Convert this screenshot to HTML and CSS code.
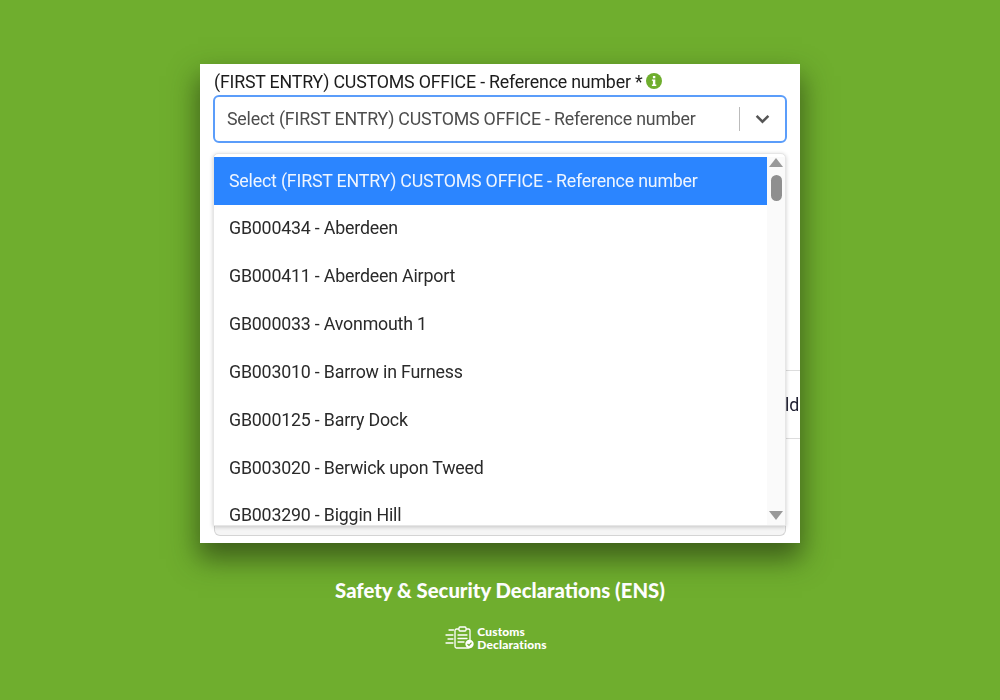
FILE: index.html
```html
<!DOCTYPE html>
<html lang="en">
<head>
<meta charset="utf-8">
<title>Safety &amp; Security Declarations (ENS)</title>
<link rel="stylesheet" href="styles.css">
</head>
<body>
<main class="page">
  <section class="card">
    <div class="label-row">
      <span>(FIRST ENTRY) CUSTOMS OFFICE - Reference number *</span>
      <svg class="info" viewBox="0 0 16 16" aria-hidden="true"><circle cx="8" cy="8" r="8" fill="#6fae2e"/><rect x="6.9" y="3" width="2.4" height="2.3" fill="#fff"/><path d="M5.9 6.5h3.4v5.1h1v1.3H5.9v-1.3h1V7.8h-1z" fill="#fff"/></svg>
    </div>
    <div class="select">
      <span class="select-text">Select (FIRST ENTRY) CUSTOMS OFFICE - Reference number</span>
      <span class="divider"></span>
      <svg class="chevron" viewBox="0 0 14 9" aria-hidden="true"><path d="M1.500 1.500 7 7l5.500-5.500" fill="none" stroke="#555" stroke-width="2.300"/></svg>
    </div>
    <div class="behind">
      <div class="behind-row"><span>ld</span></div>
      <div class="behind-foot"></div>
    </div>
    <div class="menu">
      <ul class="options">
        <li class="option selected">Select (FIRST ENTRY) CUSTOMS OFFICE - Reference number</li>
        <li class="option">GB000434 - Aberdeen</li>
        <li class="option">GB000411 - Aberdeen Airport</li>
        <li class="option">GB000033 - Avonmouth 1</li>
        <li class="option">GB003010 - Barrow in Furness</li>
        <li class="option">GB000125 - Barry Dock</li>
        <li class="option">GB003020 - Berwick upon Tweed</li>
        <li class="option last">GB003290 - Biggin Hill</li>
      </ul>
      <div class="scrollbar">
        <span class="arrow up"></span>
        <span class="thumb"></span>
        <span class="arrow down"></span>
      </div>
    </div>
  </section>
  <h1 class="caption">Safety &amp; Security Declarations (ENS)</h1>
  <div class="logo">
    <svg class="logo-mark" viewBox="0 0 30 24" aria-hidden="true">
      <g fill="none" stroke="#fff" stroke-width="1.300" stroke-linecap="round">
        <rect x="10" y="3" width="15" height="19" rx="1.500"/>
        <rect x="14" y="1" width="7" height="4" rx="1" fill="#6fae2e"/>
        <path d="M13 9h9M13 12.500h9M13 16h6"/>
        <path d="M4 4h3M7.500 4h1M1 9h7M3 13h5M1 17h7"/>
      </g>
      <circle cx="24.500" cy="18" r="4.200" fill="#fff"/>
      <path d="M22.500 18l1.500 1.500 2.500-2.800" fill="none" stroke="#6fae2e" stroke-width="1.200"/>
    </svg>
    <div class="logo-text"><span>Customs</span><span>Declarations</span></div>
  </div>
</main>
</body>
</html>
```
FILE: styles.css
```css
* { box-sizing: border-box; }
html, body { margin: 0; height: 100%; }
body {
  background: #6fae2e;
  font-family: Roboto, "Liberation Sans", sans-serif;
  overflow: hidden;
}
.page {
  height: 700px;
  display: flex;
  flex-direction: column;
  align-items: center;
  padding-top: 64px;
}
.card {
  position: relative;
  width: 600px;
  height: 479px;
  background: #fff;
  padding: 6px 13px 0;
  box-shadow: 0 14px 26px 2px rgba(38, 58, 16, .68);
  filter: blur(.3px);
  letter-spacing: -.19px;
}
.label-row {
  display: flex;
  align-items: center;
  gap: 4px;
  height: 22px;
  padding-left: 1px;
  font-size: 17.800px;
  color: #1c1c1c;
}
.info { width: 16px; height: 16px; }
.select {
  margin-top: 3px;
  height: 48px;
  display: flex;
  align-items: center;
  padding: 0 15px 1px 12px;
  border: 2px solid #5b9dfa;
  border-radius: 6px;
  color: #4d4d4d;
  font-size: 17.800px;
}
.select-text { flex: 1; white-space: nowrap; }
.divider { width: 1px; height: 24px; background: #bbb; margin-right: 15px; }
.chevron { width: 15px; height: 10px; }
.behind {
  position: absolute;
  left: 14px;
  right: 0;
  top: 306px;
  bottom: 0;
}
.behind-row {
  height: 69px;
  border-top: 1px solid #ddd;
  border-bottom: 1px solid #ddd;
  display: flex;
  align-items: center;
  justify-content: flex-end;
  padding-right: 1px;
  font-size: 17.800px;
  color: #223;
}
.behind-foot {
  position: absolute;
  left: 0;
  right: 14px;
  bottom: 7px;
  height: 12px;
  border: 1px solid #d4d4d4;
  border-top: 0;
  border-radius: 0 0 6px 6px;
  background: #f5f5f5;
}
.menu {
  position: absolute;
  left: 13px;
  top: 89px;
  width: 573px;
  height: 373px;
  display: flex;
  background: #fff;
  border: 1px solid #e6e6e6;
  border-radius: 5px 5px 0 0;
  padding-top: 3px;
  overflow: hidden;
  box-shadow: 0 1px 4px rgba(0, 0, 0, .2);
}
.options {
  flex: 1;
  margin: 0;
  padding: 0;
  list-style: none;
  overflow: hidden;
}
.option {
  height: 47.850px;
  line-height: 22px;
  padding: 12.500px 0 0 15px;
  font-size: 17.800px;
  color: #2a2a2a;
  white-space: nowrap;
}
.selected { background: #2b85ff; color: #eef5ff; }
.last { height: auto; }
.scrollbar {
  width: 18px;
  background: #fafafa;
  display: flex;
  flex-direction: column;
  align-items: center;
  padding: 1px 0 5px;
}
.arrow {
  width: 0;
  height: 0;
  border-left: 7px solid transparent;
  border-right: 7px solid transparent;
}
.up { border-bottom: 9px solid #999; }
.down { border-top: 9px solid #999; margin-top: auto; }
.thumb {
  width: 11px;
  height: 26px;
  margin-top: 8px;
  border-radius: 6px;
  background: #8f8f8f;
}
.caption {
  margin: 35px 0 0;
  font-family: Lato, "Open Sans", sans-serif;
  font-size: 20.300px;
  font-weight: 900;
  line-height: 24px;
  color: #fff;
}
.logo {
  margin-top: 23px;
  padding-right: 8px;
  display: flex;
  align-items: center;
  gap: 2px;
}
.logo-mark { width: 30px; height: 24px; }
.logo-text {
  display: flex;
  flex-direction: column;
  font-family: Lato, sans-serif;
  font-size: 12px;
  font-weight: 900;
  line-height: 13px;
  letter-spacing: .15px;
  color: #fff;
}
```
